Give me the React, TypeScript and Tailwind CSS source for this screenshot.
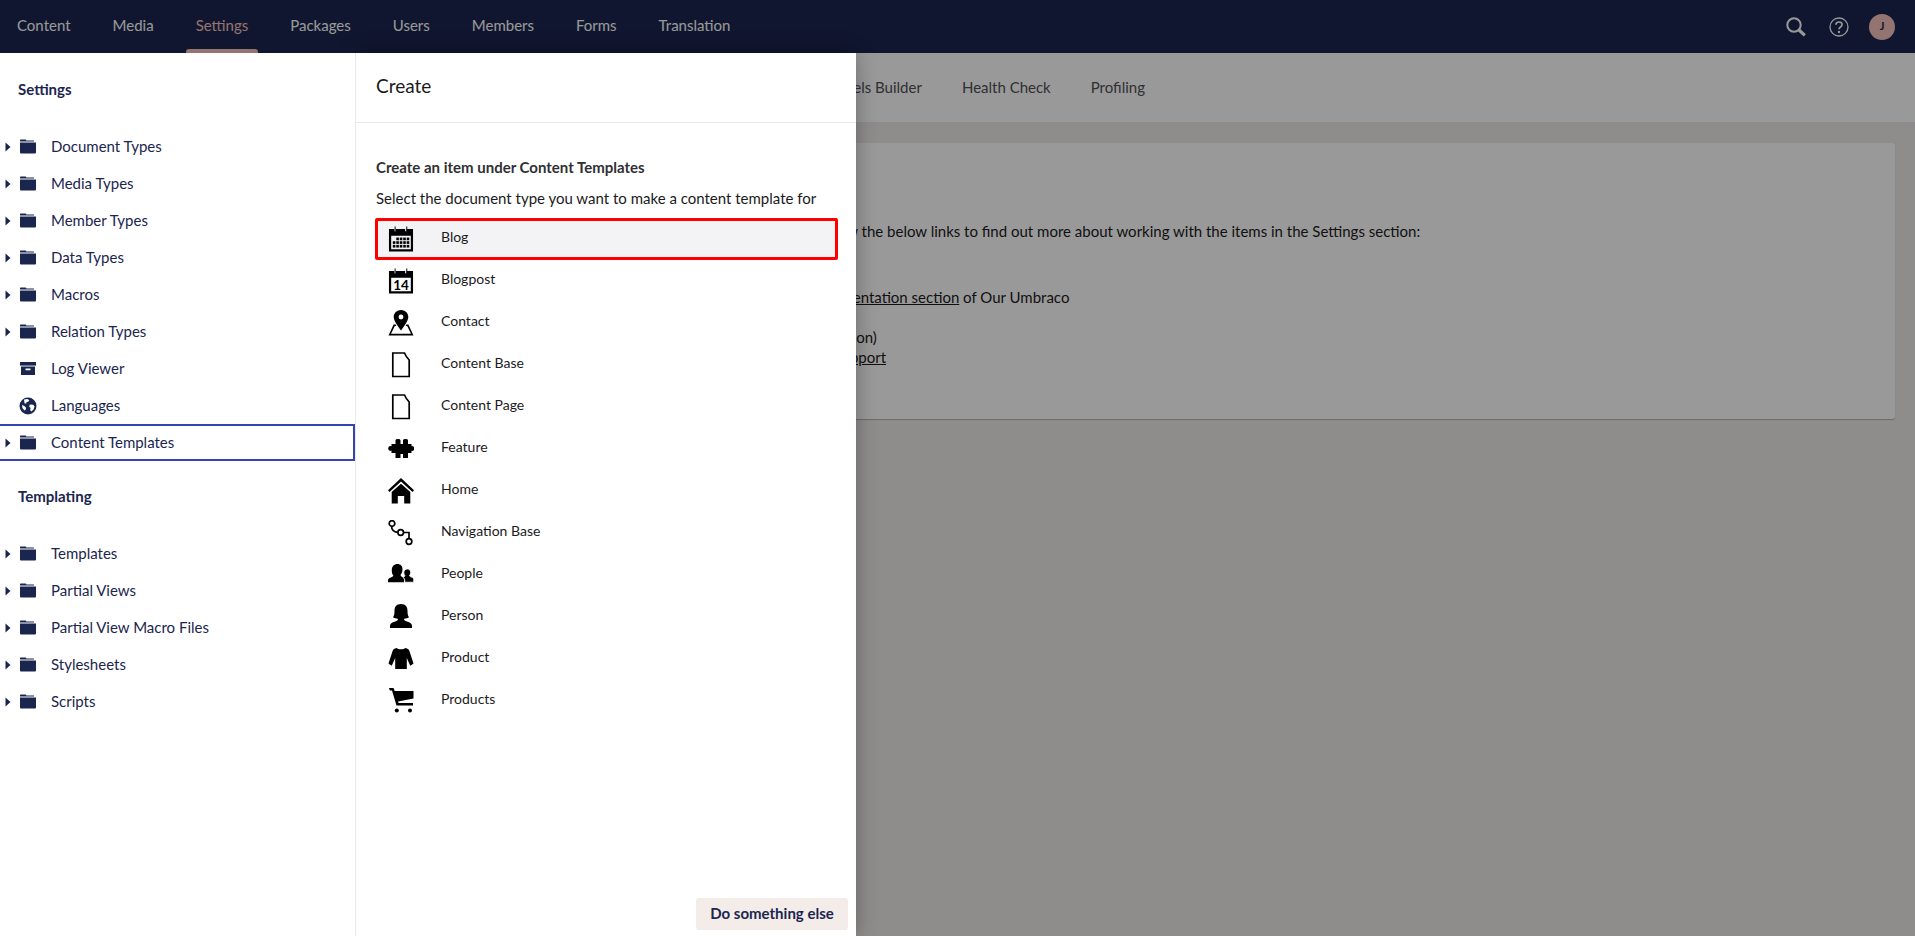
import React from "react";

const navy = "#1b264f";

function Folder() {
  return (
    <svg width="18" height="15" viewBox="0 0 18 15" fill={navy} className="shrink-0">
      <path d="M1 2.2V1.4C1 .8 1.4.4 2 .4h4.600l.9 1.100H15v1H1z" />
      <path d="M1 3.400h16v10.200c0 .5-.4.9-.9.9H1.900c-.5 0-.9-.4-.9-.9z" />
    </svg>
  );
}
function Arrow() {
  return (
    <svg width="6" height="10" viewBox="0 0 6 10" fill={navy} className="shrink-0">
      <path d="M0.500 0.500 5.500 5 0.500 9.500z" />
    </svg>
  );
}
function ArchiveIcon() {
  return (
    <svg width="18" height="15" viewBox="0 0 18 15" fill={navy} className="shrink-0">
      <rect x="1" y="1" width="16" height="3.600" />
      <path fillRule="evenodd" d="M2 5.600h14V14H2zM6.500 7.600v1.600h5V7.600z" />
    </svg>
  );
}
function GlobeIcon() {
  return (
    <svg width="18" height="18" viewBox="0 0 18 18" className="shrink-0">
      <circle cx="9" cy="9" r="8.500" fill={navy} />
      <path fill="#fff" d="M5 2.600 8.500 2l1.800 1.200-1 1.600-1.600.3-.6 1.600-1.600-.4-.3-2zM10.800 7.600l3.400.2 1.400 1.800-1.200 3.200-2.200 1.800-1-1.600.4-2-1.400-1.400zM3 8l2.400 1 1.800 2-.6 1.800-1.200.8L3.400 11z" />
    </svg>
  );
}
function CalTop() {
  return (
    <>
      <path d="M1 2.500h5.600v2.400h1.600V2.500h9.600v2.400h1.600V2.500H26V26H1zM3.300 9.500v14.200h20.400V9.500z" fillRule="evenodd" />
      <rect x="6.900" y="0" width="1" height="5" />
      <rect x="19" y="0" width="1" height="5" />
    </>
  );
}
function CalGrid() {
  const cells: [number, number][] = [];
  for (let r = 0; r < 3; r++) for (let c = 0; c < 5; c++) if (!(r === 0 && c < 1)) cells.push([5 + c * 3.6, 11.5 + r * 3.8]);
  return (
    <svg width="26" height="26" viewBox="0 0 27 26" fill="#000">
      <CalTop />
      {cells.map(([x, y], i) => (
        <rect key={i} x={x} y={y} width="2.700" height="2.800" />
      ))}
    </svg>
  );
}
function Cal14() {
  return (
    <svg width="26" height="26" viewBox="0 0 27 26" fill="#000">
      <CalTop />
      <text x="13.500" y="22.500" textAnchor="middle" fontFamily="Lato, sans-serif" fontWeight="700" fontSize="14">14</text>
    </svg>
  );
}
function PinIcon() {
  return (
    <svg width="26" height="26" viewBox="0 0 26 26" fill="#000">
      <path fillRule="evenodd" d="M13 0c4 0 7.300 3 7.300 7 0 3.800-4.500 9.500-7.300 13.500C10.200 16.500 5.700 10.800 5.700 7 5.700 3 9 0 13 0zm0 4.600a2.400 2.400 0 1 0 0 4.800 2.400 2.400 0 0 0 0-4.800z" />
      <path d="M5.600 14.500h2l.8 1.500H6.800L3 23.700h20l-3.800-7.700h-1.600l.8-1.500h2l5.100 11H.5z" />
    </svg>
  );
}
function DocIcon() {
  return (
    <svg width="26" height="26" viewBox="0 0 26 26" fill="none" stroke="#000" strokeWidth="1.700">
      <path d="M4.800 1h11.700c.6 1.500 2.600 5 4.700 7v16.500H4.800z" />
    </svg>
  );
}
function PuzzleIcon() {
  return (
    <svg width="26" height="26" viewBox="0 0 26 26" fill="#000">
      <path d="M7.500 4.200a2.500 1.300 0 0 1 5 0V8h2.500V4.200a2.500 1.300 0 0 1 5 0V8H23.500v9H20v5h-5v-4h-2.500v4h-5v-5H3.500V8h4z" />
      <circle cx="2.600" cy="12.500" r="2.400" />
      <circle cx="23.800" cy="12.500" r="2.400" />
    </svg>
  );
}
function HomeIcon() {
  return (
    <svg width="26" height="26" viewBox="0 0 26 26" fill="#000">
      <path d="M13 0 26 12.200l-1.500 1.700L13 3.400 1.500 13.900 0 12.200z" />
      <path d="M13 5.800 22.300 14v11.500h-6.100V18h-6.400v7.500H3.700V14z" />
    </svg>
  );
}
function NavIcon() {
  return (
    <svg width="26" height="26" viewBox="0 0 26 26" fill="none" stroke="#000" strokeWidth="1.700">
      <circle cx="4" cy="3.500" r="2.800" />
      <circle cx="12.700" cy="12.500" r="2.800" />
      <circle cx="21" cy="21.500" r="2.800" />
      <path d="M3.600 6.400c0 3.400 2.500 5.400 6.200 6M15.600 12.500h5.400v6.200" />
    </svg>
  );
}
function PeopleIcon() {
  return (
    <svg width="26" height="26" viewBox="0 0 26 26" fill="#000">
      <path d="M9.500 2c3.200 0 5 2.200 5 5.200 0 2.300-.8 4.300-2 5.700.2 1.300 1.300 1.900 2.500 2.500.8.400 1 1.100 1 2.400v2.400H0v-1.500c0-1.500.6-2.100 1.700-2.700 1.400-.6 3.500-1.100 3.700-2.400C4.100 12.300 3.800 10.300 3.800 8 3.800 4.300 6.300 2 9.500 2z" />
      <path d="M19.500 7c2.100 0 3.200 1.500 3.200 3.300 0 1.300-.4 2.500-1.200 3.300.1.800 1 1.100 1.900 1.500l1.300.6c.7.400 1 1 1 1.900v2.600h-9v-2c0-1.400-.6-2.100-1.700-2.700.6-.6 1.800-.8 2-1.700-.8-.8-1.200-2-1.200-3.500C15.800 8.500 17.200 7 19.500 7z" stroke="#fff" strokeWidth=".8" />
    </svg>
  );
}
function PersonIcon() {
  return (
    <svg width="26" height="26" viewBox="0 0 26 26" fill="#000">
      <path d="M13 0c4.500 0 6.500 2.800 6.500 6.700 0 3 .3 5.100 1.500 6.500-1.500 1-3.200 1.400-4.700 1.500l-.2 1.400c.5.900 3 1.400 5.500 2.500 1.600.8 2.400 2 2.400 3.600V24H2v-1.800c0-1.600.8-2.800 2.400-3.600 2.500-1.100 5-1.600 5.500-2.500l-.2-1.400c-1.500-.1-3.200-.5-4.700-1.500 1.200-1.400 1.500-3.500 1.500-6.500C6.500 2.800 8.500 0 13 0z" />
    </svg>
  );
}
function ShirtIcon() {
  return (
    <svg width="26" height="26" viewBox="0 0 26 26" fill="#000">
      <path d="M8.500 2c1 .9 2.700 1.300 4.500 1.300S16.500 2.900 17.500 2c2 .4 3.300 1.200 3.900 3L25.500 17.500l-3 2.200-.7-1-3-6.700v11H7.200V12l-3 6.700-.7 1-3-2.200L4.600 5c.6-1.800 1.900-2.600 3.900-3z" />
    </svg>
  );
}
function CartIcon() {
  return (
    <svg width="26" height="26" viewBox="0 0 26 26" fill="#000">
      <path d="M1 0h4.500l1.200 3H25.500v7.500L10 13.400l.6 1.500H25v2.700H8.500L4 2.500H1.800z" />
      <circle cx="8.800" cy="22.500" r="2" />
      <circle cx="22" cy="22.500" r="2" />
    </svg>
  );
}
function SearchIcon() {
  return (
    <svg width="20" height="20" viewBox="0 0 20 20" fill="none" stroke="#fff" className="mr-[3px]">
      <circle cx="8" cy="8" r="6.700" strokeWidth="2" />
      <path d="M13 13 18.800 18.400" strokeWidth="3.200" />
    </svg>
  );
}
function HelpIcon() {
  return (
    <svg width="20" height="20" viewBox="0 0 20 20" fill="none" stroke="#fff">
      <circle cx="10" cy="10" r="9" strokeWidth="1.300" />
      <path d="M6.900 7.800C6.900 5.900 8.300 5 10 5c1.800 0 3.100 1 3.100 2.600 0 2.400-3.100 2.300-3.100 4.700" strokeWidth="1.700" />
      <circle cx="10" cy="15" r="1.200" fill="#fff" stroke="none" />
    </svg>
  );
}

const navItems = ["Content", "Media", "Settings", "Packages", "Users", "Members", "Forms", "Translation"];

function TreeRow({ label, icon, arrow = true, active = false }: { label: string; icon?: React.ReactNode; arrow?: boolean; active?: boolean }) {
  return (
    <div className={`flex h-[37px] items-center text-[15px] text-[#1b264f] ${active ? "border-2 border-[#3544b1] -ml-[2px] pl-[5px]" : "pl-[5px]"}`}>
      <span className="flex w-[14px] shrink-0 items-center">{arrow && <Arrow />}</span>
      <span className="flex w-[32px] shrink-0 items-center">{icon ?? <Folder />}</span>
      <span>{label}</span>
    </div>
  );
}

function DocType({ label, icon, active = false }: { label: string; icon: React.ReactNode; active?: boolean }) {
  return (
    <div className={`flex h-[42px] items-center rounded-[2px] ${active ? "border-[3px] border-[#ff0000] bg-[#f3f3f5] pl-[10px]" : "pl-[13px]"}`}>
      <span className="-mt-[1px] flex w-[53px] shrink-0 items-center">{icon}</span>
      <span className="-mt-[5px] text-[14px] text-[#1b1b1d]">{label}</span>
    </div>
  );
}

export default function App() {
  return (
    <div className="relative flex h-[936px] w-full flex-col overflow-hidden bg-[#eeeaea] font-['Lato',sans-serif] text-[#303033]">
      <header className="flex h-[53px] shrink-0 items-stretch justify-between bg-[#1b264f]">
        <nav className="flex">
          {navItems.map((n) => (
            <div key={n} className={`relative flex items-center px-[21px] pb-[3px] text-[15px] first:pl-[17px] ${n === "Settings" ? "text-[#f5c1bc]" : "text-white"}`}>
              {n}
              {n === "Settings" && <span className="absolute bottom-0 left-[11px] right-[11px] h-[4px] rounded-t-[3px] bg-[#f5c1bc]" />}
            </div>
          ))}
        </nav>
        <div className="flex items-center gap-[20px] pr-[20px]">
          <SearchIcon />
          <HelpIcon />
          <div className="flex h-[26px] w-[26px] items-center justify-center rounded-full bg-[#f5c1bc] text-[11px] font-bold text-[#1b264f]">J</div>
        </div>
      </header>

      <div className="flex min-h-0 flex-1">
        <aside className="relative z-30 w-[356px] shrink-0 overflow-hidden border-r border-[#e9e9eb] bg-white">
          <h2 className="pl-[18px] pt-[26px] text-[15px] font-bold leading-5 text-[#1b264f]">Settings</h2>
          <div className="mt-[29px]">
            <TreeRow label="Document Types" />
            <TreeRow label="Media Types" />
            <TreeRow label="Member Types" />
            <TreeRow label="Data Types" />
            <TreeRow label="Macros" />
            <TreeRow label="Relation Types" />
            <TreeRow label="Log Viewer" arrow={false} icon={<ArchiveIcon />} />
            <TreeRow label="Languages" arrow={false} icon={<GlobeIcon />} />
            <TreeRow label="Content Templates" active />
          </div>
          <h2 className="pl-[18px] pt-[25px] text-[15px] font-bold leading-5 text-[#1b264f]">Templating</h2>
          <div className="mt-[29px]">
            <TreeRow label="Templates" />
            <TreeRow label="Partial Views" />
            <TreeRow label="Partial View Macro Files" />
            <TreeRow label="Stylesheets" />
            <TreeRow label="Scripts" />
          </div>
        </aside>

        <main className="min-w-0 flex-1">
          <div className="flex h-[70px] items-center justify-end border-b border-[#e9e9eb] bg-white pr-[750px] pb-[1px] text-[15px] text-[#515054]">
            {["Welcome", "Examine Management", "Published Status", "Models Builder", "Health Check", "Profiling"].map((t) => (
              <span key={t} className="whitespace-nowrap px-[20px]">{t}</span>
            ))}
          </div>
          <section className="mx-[20px] mt-[20px] h-[276px] rounded-[3px] bg-white px-[20px] pt-[32px] text-[15px] leading-[20px] text-[#1b1b1d] shadow-[0_1px_1px_rgba(0,0,0,0.25)]">
            <h3 className="text-[18px] font-bold leading-[25px]">Start here</h3>
            <p className="mt-[21px]">This section contains the building blocks for your Umbraco site. Follow the below links to find out more about working with the items in the Settings section:</p>
            <h5 className="mt-[21px] font-bold">Find out more:</h5>
            <ul className="ml-[25px] mt-[5px] list-disc">
              <li>Read more about working with the items in Settings <a className="underline">in the Documentation section</a> of Our Umbraco</li>
              <li>Ask a question in the <a className="underline">Community Forum</a></li>
              <li>Watch our <a className="underline">tutorial videos</a> (some are free, some require a subscription)</li>
              <li>Find out about our <a className="underline">productivity boosting tools and commercial support</a></li>
              <li>Find out about real-life <a className="underline">training and certification</a> opportunities</li>
            </ul>
          </section>
        </main>
      </div>

      <div className="absolute inset-0 z-10 bg-black/40" />

      <aside className="absolute bottom-0 left-[356px] top-[53px] z-20 flex w-[500px] flex-col bg-white shadow-[0_0_20px_rgba(0,0,0,0.3)]">
        <div className="flex h-[70px] shrink-0 items-center border-b border-[#e9e9eb] pl-[20px] pb-[2px] text-[19px] text-[#1b1b1d]">Create</div>
        <div className="min-h-0 flex-1 px-[19px] pt-[34px]">
          <h4 className="pl-px text-[15px] font-bold leading-[20px] text-[#303033]">Create an item under Content Templates</h4>
          <p className="mt-[11px] pl-px text-[15px] leading-[20px] text-[#1b1b1d]">Select the document type you want to make a content template for</p>
          <div className="mt-[10px] w-[463px]">
            <DocType active label="Blog" icon={<CalGrid />} />
            <DocType label="Blogpost" icon={<Cal14 />} />
            <DocType label="Contact" icon={<PinIcon />} />
            <DocType label="Content Base" icon={<DocIcon />} />
            <DocType label="Content Page" icon={<DocIcon />} />
            <DocType label="Feature" icon={<PuzzleIcon />} />
            <DocType label="Home" icon={<HomeIcon />} />
            <DocType label="Navigation Base" icon={<NavIcon />} />
            <DocType label="People" icon={<PeopleIcon />} />
            <DocType label="Person" icon={<PersonIcon />} />
            <DocType label="Product" icon={<ShirtIcon />} />
            <DocType label="Products" icon={<CartIcon />} />
          </div>
        </div>
        <div className="flex shrink-0 justify-end pb-[6px] pr-[8px]">
          <button className="h-[32px] w-[152px] rounded-[3px] bg-[#f3ece9] pb-[2px] text-[15px] font-bold text-[#1b264f]">Do something else</button>
        </div>
      </aside>
    </div>
  );
}
